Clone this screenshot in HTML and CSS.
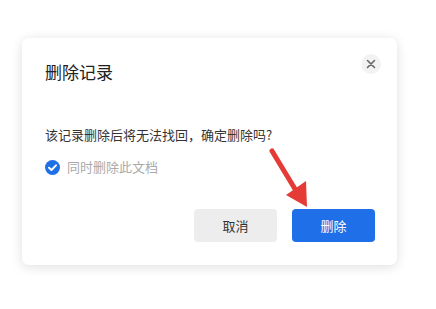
FILE: index.html
```html
<!DOCTYPE html>
<html lang="zh">
<head>
<meta charset="utf-8">
<link rel="stylesheet" href="styles.css">
</head>
<body>
<div class="page">
  <div class="card">
    <div class="header">
      <div class="title">删除记录</div>
      <div class="close">
        <svg width="10" height="10" viewBox="0 0 10 10"><path d="M1.5 1.5 L8.5 8.5 M8.5 1.5 L1.5 8.5" stroke="#666" stroke-width="1.6" stroke-linecap="round"/></svg>
      </div>
    </div>
    <div class="message">该记录删除后将无法找回，确定删除吗?</div>
    <div class="check-row">
      <span class="check">
        <svg width="15" height="15" viewBox="0 0 15 15"><circle cx="7.5" cy="7.5" r="7.5" fill="#1f6fe5"/><path d="M4 7.7 L6.5 10 L11 5.3" stroke="#fff" stroke-width="1.9" fill="none" stroke-linecap="round" stroke-linejoin="round"/></svg>
      </span>
      <span class="check-label">同时删除此文档</span>
    </div>
    <div class="actions">
      <button class="btn btn-cancel">取消</button>
      <button class="btn btn-primary">删除</button>
    </div>
  </div>
  <svg class="arrow" width="436" height="309" viewBox="0 0 436 309">
    <line x1="272" y1="151" x2="295" y2="189" stroke="#e53b37" stroke-width="5" stroke-linecap="round"/>
    <polygon points="286,195 306,181 307,207" fill="#e53b37"/>
  </svg>
</div>
</body>
</html>
```
FILE: styles.css
```css
html, body {
  margin: 0;
  padding: 0;
  background: #ffffff;
}
.page {
  width: 436px;
  height: 309px;
  padding: 38px 0 0 22px;
  box-sizing: border-box;
  font-family: "Noto Sans CJK SC", "Noto Sans", sans-serif;
}
.card {
  width: 375px;
  height: 227px;
  box-sizing: border-box;
  padding: 22px 22px 23px 23px;
  background: #fff;
  border-radius: 7px;
  box-shadow: 0 2px 12px rgba(0, 0, 0, 0.13);
  display: flex;
  flex-direction: column;
}
.header {
  display: flex;
  justify-content: space-between;
  align-items: flex-start;
}
.title {
  font-size: 17px;
  line-height: 24px;
  color: #222;
}
.close {
  width: 20px;
  height: 20px;
  border-radius: 50%;
  background: #f2f2f2;
  display: flex;
  align-items: center;
  justify-content: center;
  margin-top: -6px;
  margin-right: -6px;
}
.message {
  margin-top: 41px;
  font-size: 13px;
  line-height: 20px;
  color: #333;
}
.check-row {
  margin-top: 12px;
  display: flex;
  align-items: center;
  gap: 7px;
  height: 20px;
}
.check {
  display: flex;
}
.check-label {
  font-size: 13px;
  line-height: 20px;
  color: #aaa;
}
.actions {
  margin-top: auto;
  display: flex;
  justify-content: flex-end;
  gap: 15px;
}
.btn {
  width: 83px;
  height: 33px;
  border: none;
  border-radius: 4px;
  font-family: inherit;
  font-size: 13px;
  padding: 0;
}
.btn-cancel {
  background: #ededed;
  color: #333;
}
.btn-primary {
  background: #1f6fe8;
  color: #fff;
}
.arrow {
  position: absolute;
  left: 0;
  top: 0;
  pointer-events: none;
}
```
